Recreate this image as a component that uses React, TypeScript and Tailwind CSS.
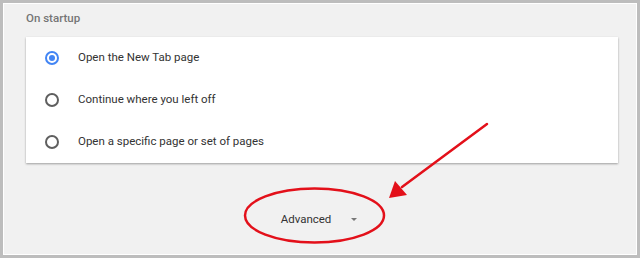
import React from "react";

const options = [
  "Open the New Tab page",
  "Continue where you left off",
  "Open a specific page or set of pages",
];

function Radio({ checked }: { checked: boolean }) {
  if (checked) {
    return (
      <span className="flex h-[14px] w-[14px] items-center justify-center rounded-full border-2 border-[#4285f4]">
        <span className="h-[6px] w-[6px] rounded-full bg-[#4285f4]" />
      </span>
    );
  }
  return <span className="h-[14px] w-[14px] rounded-full border-2 border-[#5f5f5f]" />;
}

export default function App() {
  return (
    <div className="relative h-[258px] w-[640px] border-[3px] border-[#bdbdbd] font-['Roboto',_'Liberation_Sans',_sans-serif]">
      <div className="h-full w-full border border-white bg-[#f1f1f1] pl-[22px] pr-[18px]">
        <div className="h-[33px] pt-[6px] text-[11.5px] font-medium leading-[16px] text-[#757575]">
          On startup
        </div>
        <div className="bg-white shadow-[0_1px_2px_rgba(0,0,0,0.35)]">
          {options.map((label, i) => (
            <div key={label} className="flex h-[42px] items-center">
              <div className="flex w-[52px] justify-center">
                <Radio checked={i === 0} />
              </div>
              <span className="text-[11.5px] text-[#333]">{label}</span>
            </div>
          ))}
        </div>
        <div className="mt-[48px] flex items-center justify-center gap-[20px] pr-[6px]">
          <span className="text-[11.5px] leading-[16px] text-[#333]">Advanced</span>
          <span className="h-0 w-0 border-x-[3px] border-t-[3px] border-x-transparent border-t-[#777]" />
        </div>
      </div>

      {/* annotation overlay */}
      <svg
        className="pointer-events-none absolute left-[-3px] top-[-3px]"
        width="640"
        height="258"
        viewBox="0 0 640 258"
      >
        <ellipse cx="314.5" cy="215.5" rx="69.5" ry="27" fill="none" stroke="#e3101a" strokeWidth="2.5" />
        <line x1="487" y1="124" x2="402" y2="187" stroke="#e3101a" strokeWidth="2.5" strokeLinecap="round" />
        <polygon points="389,198 395,181 407,195" fill="#e3101a" />
      </svg>
    </div>
  );
}
